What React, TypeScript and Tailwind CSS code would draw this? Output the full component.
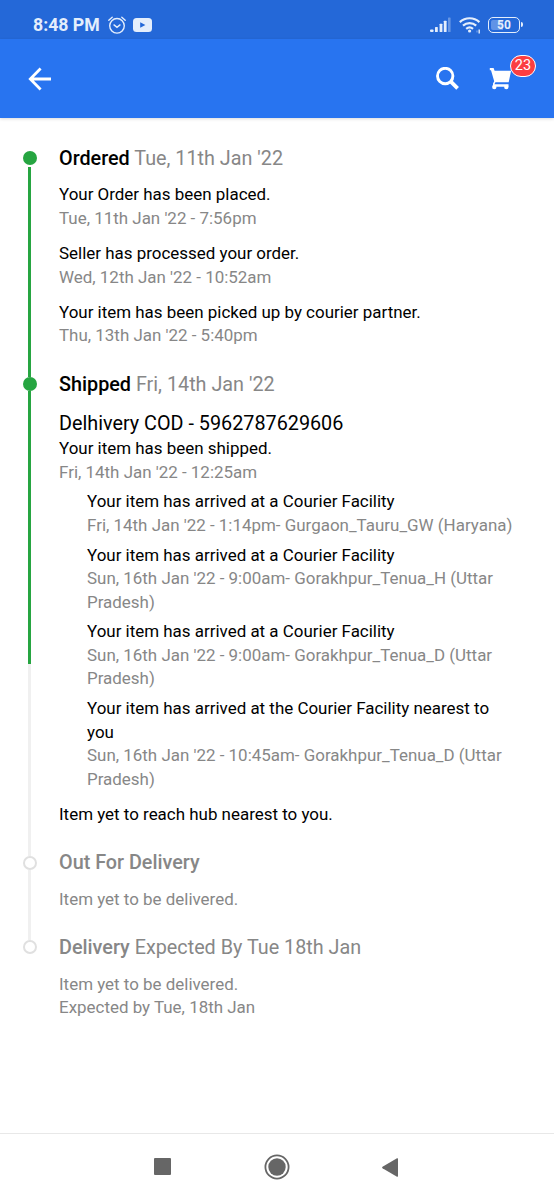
import React from "react";

type Update = {
  text: string;
  time: string;
};

const placed: Update[] = [
  { text: "Your Order has been placed.", time: "Tue, 11th Jan '22 - 7:56pm" },
  { text: "Seller has processed your order.", time: "Wed, 12th Jan '22 - 10:52am" },
  {
    text: "Your item has been picked up by courier partner.",
    time: "Thu, 13th Jan '22 - 5:40pm",
  },
];

const facilities: Update[] = [
  {
    text: "Your item has arrived at a Courier Facility",
    time: "Fri, 14th Jan '22 - 1:14pm- Gurgaon_Tauru_GW (Haryana)",
  },
  {
    text: "Your item has arrived at a Courier Facility",
    time: "Sun, 16th Jan '22 - 9:00am- Gorakhpur_Tenua_H (Uttar Pradesh)",
  },
  {
    text: "Your item has arrived at a Courier Facility",
    time: "Sun, 16th Jan '22 - 9:00am- Gorakhpur_Tenua_D (Uttar Pradesh)",
  },
  {
    text: "Your item has arrived at the Courier Facility nearest to you",
    time: "Sun, 16th Jan '22 - 10:45am- Gorakhpur_Tenua_D (Uttar Pradesh)",
  },
];

const StatusBar = () => (
  <div className="flex h-[39px] items-center bg-[#2468d8] pl-[33px] pr-[31px] pt-[10px] text-[#e4eefc]">
    <span className="text-[17.7px] font-bold leading-5">8:48 PM</span>
    <svg className="ml-[7px]" width="20" height="20" viewBox="0 0 20 20" fill="none" stroke="currentColor" strokeWidth="1.4" strokeLinecap="round">
      <circle cx="10" cy="10.8" r="7.3" />
      <path d="M1.8 5.2 5.2 2.2M18.2 5.2 14.8 2.2M7 9.9l3 2.4 3-2.4" />
    </svg>
    <svg className="ml-[6px]" width="19" height="14" viewBox="0 0 19 14">
      <rect width="19" height="14" rx="3.5" fill="currentColor" />
      <path d="M7.2 4.2v5.6L12.4 7z" fill="#2468d8" />
    </svg>
    <svg className="ml-auto" width="22" height="17" viewBox="0 0 22 17" fill="currentColor">
      <rect x="0" y="13.5" width="3.6" height="2.5" rx="1" />
      <rect x="5" y="10.9" width="2.8" height="5.1" rx="0.6" />
      <rect x="9.6" y="7.7" width="2.8" height="8.3" rx="0.6" />
      <rect x="13.8" y="4.7" width="2.8" height="11.3" rx="0.6" />
      <rect x="18" y="1.5" width="2.6" height="14.5" rx="0.6" opacity="0.35" />
    </svg>
    <svg className="ml-[7px]" width="23" height="18" viewBox="0 0 23 18" fill="none" stroke="currentColor" strokeWidth="2.2">
      <path d="M0.8 6.1a14.4 14.4 0 0 1 19.6 0M4 9.6a9.8 9.8 0 0 1 13.2 0M7.2 12.8a5.2 5.2 0 0 1 6.800 0" />
      <circle cx="10.6" cy="15" r="1.6" fill="currentColor" stroke="none" />
      <path d="M20.2 13.5v4" strokeWidth="1.4" />
      <path d="M18 14.5v2" strokeWidth="1" opacity="0.5" />
    </svg>
    <div className="ml-[6px] flex h-[16px] w-[32px] items-center justify-center rounded-[5px] border-[1.5px] border-current bg-linear-to-r from-[#6093e6] from-45% to-transparent to-45% bg-clip-content p-[2px] text-[12px] font-bold leading-3">
      50
    </div>
    <div className="ml-px h-[5px] w-[2px] rounded-r bg-current" />
  </div>
);

const Header = () => (
  <header className="flex h-[79px] items-center bg-[#2874f0] pl-[28px] text-white shadow-[0_1px_3px_rgba(0,0,0,0.15)]">
    <svg width="24" height="24" viewBox="0 0 24 24" fill="none" stroke="currentColor" strokeWidth="2.8">
      <path d="M12.6 1.6 2.3 12l10.3 10.4M2 12h21" />
    </svg>
    <svg className="ml-[384px]" width="24" height="24" viewBox="0 0 24 24" fill="none" stroke="currentColor">
      <circle cx="9.2" cy="9" r="7.700" strokeWidth="2.9" />
      <path d="m14.6 14.4 7 7" strokeWidth="3.8" />
    </svg>
    <div className="relative ml-[29px]">
      <svg width="23" height="24" viewBox="0 0 23 24" fill="currentColor">
        <path d="M0.8 1h3.8l1 2.8h16.5l-2.400 11.500H6.4l-1 2h14.1v2.5H4V16.500l1.200-2.200L2 3.200H0.8z" />
        <circle cx="5.3" cy="20" r="2.2" />
        <circle cx="17.3" cy="20" r="2.2" />
      </svg>
      <span className="absolute -top-[12px] left-[21px] flex h-[22px] w-[26px] items-center justify-center rounded-full border-[1.5px] border-white bg-[#fb3e42] pt-px text-[14.5px] leading-4">
        23
      </span>
    </div>
  </header>
);

const UpdateItem = ({ text, time }: Update) => (
  <div>
    <p>{text}</p>
    <p className="text-[#878787]">{time}</p>
  </div>
);

type StageProps = {
  title: string;
  date?: string;
  pending?: boolean;
  rail?: React.ReactNode;
  children: React.ReactNode;
};

const Stage = ({ title, date, pending, rail, children }: StageProps) => (
  <section className={pending ? "flex text-[#878787]" : "flex text-black"}>
    {/* the rail reaches down to the dot of the next stage */}
    <div className="-mb-[7px] mr-[22px] mt-[7px] flex w-[15px] shrink-0 flex-col items-center">
      <div
        className={
          pending
            ? "size-[14px] shrink-0 rounded-full border-2 border-[#e0e0e0] bg-white"
            : "size-[14px] shrink-0 rounded-full bg-[#26a541]"
        }
      />
      {rail}
    </div>
    <div className="min-w-0 flex-1 pb-[22px]">
      <h2 className="mb-[10.4px] pt-[0.8px] text-[19.8px] leading-[28px]">
        <span className="font-medium">{title}</span>{" "}
        {date && <span className="text-[#878787]">{date}</span>}
      </h2>
      {children}
    </div>
  </section>
);

const NavBar = () => (
  <nav className="mt-auto flex h-[67px] items-center border-t border-[#e8e8e8] pl-[154px] text-[#666]">
    <div className="mb-px size-[17px] rounded-[1px] bg-current" />
    <svg className="ml-[93px]" width="26" height="26" viewBox="0 0 26 26">
      <circle cx="13" cy="13" r="11.6" fill="none" stroke="currentColor" strokeWidth="1.8" />
      <circle cx="13" cy="13" r="8.7" fill="currentColor" />
    </svg>
    <svg className="ml-[92px]" width="16" height="19" viewBox="0 0 16 19" fill="currentColor">
      <path d="M0.5 8.7 15 0.3q1-.4 1 .6v17.2q0 1-1 .6L0.5 10.3q-.8-.8 0-1.6z" />
    </svg>
  </nav>
);

const App = () => {
  return (
    <div className="flex h-[1200px] w-[554px] flex-col overflow-hidden bg-white font-['Roboto',sans-serif]">
      <StatusBar />
      <Header />

      <main className="pl-[22px] pr-[38px] pt-[26px] text-[16.94px] leading-[23.6px]">
        <Stage
          title="Ordered"
          date="Tue, 11th Jan '22"
          rail={<div className="mt-[2px] w-[3px] flex-1 bg-[#26a541]" />}
        >
          <div className="flex flex-col gap-[11.6px]">
            {placed.map((item) => (
              <UpdateItem key={item.text} {...item} />
            ))}
          </div>
        </Stage>

        <Stage
          title="Shipped"
          date="Fri, 14th Jan '22"
          rail={
            <>
              <div className="h-[273px] w-[3px] bg-[#26a541]" />
              <div className="w-[3px] flex-1 bg-[#f0f0f0]" />
            </>
          }
        >
          <p className="-mb-[0.8px] pt-[0.8px] text-[19.8px] leading-[28px]">
            Delhivery COD - 5962787629606
          </p>
          <UpdateItem text="Your item has been shipped." time="Fri, 14th Jan '22 - 12:25am" />
          <div className="mb-[11.5px] ml-[28px] mt-[6px] flex flex-col gap-[6px]">
            {facilities.map((item) => (
              <UpdateItem key={item.time} {...item} />
            ))}
          </div>
          <p>Item yet to reach hub nearest to you.</p>
        </Stage>

        <Stage
          title="Out For Delivery"
          pending
          rail={<div className="w-[3px] flex-1 bg-[#f0f0f0]" />}
        >
          <p>Item yet to be delivered.</p>
        </Stage>

        <Stage title="Delivery" date="Expected By Tue 18th Jan" pending>
          <p>Item yet to be delivered.</p>
          <p>Expected by Tue, 18th Jan</p>
        </Stage>
      </main>

      <NavBar />
    </div>
  );
};

export default App;
